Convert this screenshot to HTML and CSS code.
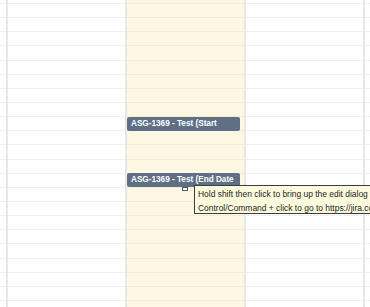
FILE: index.html
```html
<!DOCTYPE html>
<html>
<head>
	<meta charset="utf-8">
	<meta name="viewport" content="width=device-width, initial-scale=1">
	<title>Calendar week</title>
	<link rel="stylesheet" href="styles.css">
</head>
<body>
	<div class="calendar">
		<div class="day edge"></div>
		<div class="day"></div>
		<div class="day today">
			<div class="event first">ASG-1369 - Test (Start</div>
			<div class="event second">ASG-1369 - Test (End Date
				<span class="cursor"></span>
				<div class="tip">
					<p>Hold shift then click to bring up the edit dialog</p>
					<p>Control/Command + click to go to https://jira.com/browse/ASG-1369</p>
				</div>
			</div>
		</div>
		<div class="day"></div>
		<div class="day rest"></div>
	</div>
</body>
</html>
```

FILE: styles.css
```css
body{
	margin: 0px;
	padding: 0px;
	background: #fff;
	font-family: "Liberation Sans", Arial, sans-serif;
	overflow: hidden;
}

.calendar{
	display: flex;
	height: 307px;
	width: 370px;
	overflow: hidden;
}

.day{
	width: 117px;
	flex: none;
	border-left: 2px solid #e8e8e8;
	background-color: #fff;
	background-image: repeating-linear-gradient(to bottom, #efefef 0px, #efefef 1px, transparent 1px, transparent 14.14px);
	background-position: 0px 3px;
}

.day.edge{
	width: 6px;
	border-left: none;
}

.day.rest{
	width: 20px;
}

.day.today{
	background-color: #fcf6e2;
	background-image: repeating-linear-gradient(to bottom, #f3ecd5 0px, #f3ecd5 1px, transparent 1px, transparent 14.14px);
	display: flex;
	flex-direction: column;
}

.event{
	width: 113px;
	height: 14px;
	box-sizing: border-box;
	background: #5f6f86;
	border-radius: 2px;
	color: #fff;
	font-size: 8.2px;
	font-weight: bold;
	line-height: 14px;
	padding-left: 4px;
	white-space: nowrap;
	overflow: visible;
	position: relative;
}

.event.first{
	margin-top: 117px;
}

.event.second{
	margin-top: 42px;
}

.cursor{
	position: absolute;
	left: 55px;
	top: 14px;
	width: 4px;
	height: 2px;
	background: #fff;
	border: 1px solid #555;
	box-sizing: content-box;
}

.tip{
	position: absolute;
	left: 67px;
	top: 12px;
	width: 240px;
	height: 29px;
	background: #fcfadd;
	border: 1px solid #3c3c3c;
	box-sizing: border-box;
	padding: 1px 0px 0px 3px;
	z-index: 2;
}

.tip p{
	margin: 0px;
	color: #1e1e1e;
	font-size: 8.45px;
	font-weight: normal;
	line-height: 14px;
	white-space: nowrap;
}
```
